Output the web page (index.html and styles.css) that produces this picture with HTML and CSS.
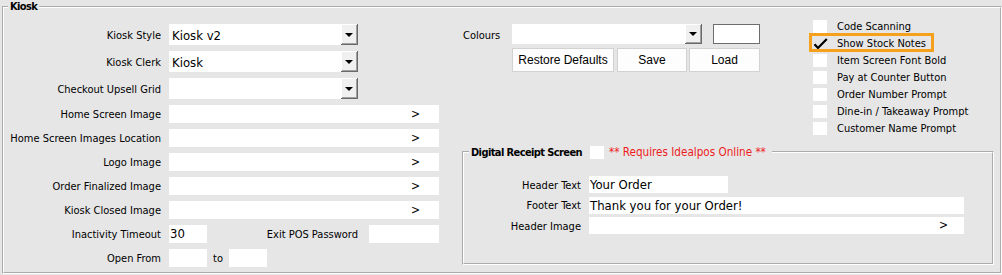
FILE: index.html
```html
<!DOCTYPE html>
<html>
<head>
  <meta charset="UTF-8">
  <title>Kiosk Settings</title>
  <link rel="stylesheet" href="styles.css">
</head>

<body>
  <fieldset class="group kiosk">
    <legend>Kiosk</legend>
    <div class="kiosk-body">

      <!-- left column: label / control pairs -->
      <div class="form">
        <label>Kiosk Style</label>
        <div class="combo"><span class="combo-text">Kiosk v2</span><span class="combo-btn"></span></div>

        <label>Kiosk Clerk</label>
        <div class="combo"><span class="combo-text">Kiosk</span><span class="combo-btn"></span></div>

        <label>Checkout Upsell Grid</label>
        <div class="combo"><span class="combo-text"></span><span class="combo-btn"></span></div>

        <label>Home Screen Image</label>
        <div class="path">&gt;</div>

        <label>Home Screen Images Location</label>
        <div class="path">&gt;</div>

        <label>Logo Image</label>
        <div class="path">&gt;</div>

        <label>Order Finalized Image</label>
        <div class="path">&gt;</div>

        <label>Kiosk Closed Image</label>
        <div class="path">&gt;</div>

        <label>Inactivity Timeout</label>
        <div class="inline-row">
          <span class="field field-short">30</span>
          <span class="inline-label push">Exit POS Password</span>
          <span class="field field-pass"></span>
        </div>

        <label>Open From</label>
        <div class="inline-row">
          <span class="field field-short"></span>
          <span class="inline-label">to</span>
          <span class="field field-short"></span>
        </div>
      </div>

      <!-- right side: colours, options, digital receipt -->
      <div class="side">
        <div class="side-top">
          <div class="colours">
            <div class="colours-row">
              <span class="colours-label">Colours</span>
              <div class="combo combo-colours"><span class="combo-text"></span><span class="combo-btn"></span></div>
              <span class="swatch"></span>
            </div>
            <div class="btn-row">
              <button class="btn btn-restore">Restore Defaults</button>
              <button class="btn btn-save">Save</button>
              <button class="btn btn-load">Load</button>
            </div>
          </div>

          <ul class="checks">
            <li><span class="box"></span>Code Scanning</li>
            <li class="highlighted">
              <span class="box box-checked">
                <svg width="15" height="13" viewBox="0 0 15 13"><path d="M1.5 7.2 L5 11 L13.8 2" fill="none" stroke="#000" stroke-width="2.2"/></svg>
              </span>Show Stock Notes
              <span class="marker"></span>
            </li>
            <li><span class="box"></span>Item Screen Font Bold</li>
            <li><span class="box"></span>Pay at Counter Button</li>
            <li><span class="box"></span>Order Number Prompt</li>
            <li><span class="box"></span>Dine-in / Takeaway Prompt</li>
            <li><span class="box"></span>Customer Name Prompt</li>
          </ul>
        </div>

        <fieldset class="group receipt">
          <legend><b>Digital Receipt Screen</b><span class="box legend-box"></span><span class="note">** Requires Idealpos Online **</span></legend>
          <div class="receipt-form">
            <label>Header Text</label>
            <span class="field field-header">Your Order</span>

            <label>Footer Text</label>
            <span class="field field-wide">Thank you for your Order!</span>

            <label>Header Image</label>
            <div class="path path-wide">&gt;</div>
          </div>
        </fieldset>
      </div>

    </div>
  </fieldset>
</body>
</html>
```

FILE: styles.css
```css
/* base - windows form look */
body {
  margin: 0;
  width: 1002px;
  height: 275px;
  overflow: hidden;
  background: #e6e6e6;
  color: #000;
  font: 11px "DejaVu Sans Condensed", "DejaVu Sans", sans-serif;
}

/* etched group boxes */
.group {
  margin: 0;
  padding: 0;
  min-width: 0;
  box-sizing: border-box;
  border: 2px groove #fff;
}
.group > legend {
  padding: 0 2px;
  height: 14px;
  line-height: 14px;
  white-space: nowrap;
}
/* bold captions are a touch tighter (tahoma bold) */
.group > legend b,
.kiosk > legend { letter-spacing: -0.6px; }

.kiosk {
  margin-left: 2px;
  width: 1000px;
  height: 274px;
}
.kiosk > legend { margin-left: 4px; font-weight: bold; }

.kiosk-body { display: flex; }

/*********************
 * left column form  *
 *********************/
.form {
  margin-top: 10px;
  display: grid;
  grid-template-columns: 157px 270px;
  grid-template-rows: repeat(3, 21px) repeat(7, 18px);
  column-gap: 8px;
  row-gap: 6px;
  align-items: center;
}
.form label, .receipt-form label {
  text-align: right;
  white-space: nowrap;
  padding-top: 1px;
}

/* combo box = white text part + 3d drop button */
.combo {
  display: flex;
  width: 189px;
  height: 21px;
}
.combo-text {
  flex: 1;
  background: #fff;
  padding: 1px 0 0 3px;
  font-size: 13px;
  line-height: 21px;
}
.combo-btn {
  width: 17px;
  box-sizing: border-box;
  background: #f0f0f0;
  border-right: 1px solid #696969;
  border-bottom: 1px solid #696969;
  box-shadow: inset 1px 1px 0 #fff, inset -1px -1px 0 #a0a0a0;
  display: flex;
  align-items: center;
  justify-content: center;
}
.combo-btn:after {
  content: "";
  border-left: 4px solid transparent;
  border-right: 4px solid transparent;
  border-top: 4px solid #000;
  margin-top: 1px;
}

/* file path pickers */
.path {
  width: 270px;
  height: 18px;
  box-sizing: border-box;
  background: #fff;
  padding-right: 19px;
  text-align: right;
  font-size: 12px;
  line-height: 18px;
}

.field {
  display: block;
  height: 18px;
  box-sizing: border-box;
  background: #fff;
  padding-left: 1px;
  font-size: 13px;
  line-height: 18px;
}
.field-short { width: 38px; }
.field-pass  { width: 70px; }

.inline-row {
  display: flex;
  align-items: center;
  height: 18px;
}
.inline-label { margin: 1px 6px 0; }
.inline-label.push { margin: 1px 11px 0 auto; }

/**************
 * right side *
 **************/
.side {
  margin-left: 23px;
  width: 532px;
  display: flex;
  flex-direction: column;
}
.side-top {
  height: 131px;
  display: flex;
  align-items: flex-start;
}

.colours { margin: 10px 0 0 1px; }
.colours-row { display: flex; align-items: center; }
.colours-label { width: 49px; padding-top: 2px; }
.combo-colours { width: 190px; height: 20px; }
.combo-colours .combo-text { line-height: 20px; }
.swatch {
  margin-left: 11px;
  width: 47px;
  height: 20px;
  box-sizing: border-box;
  background: #fff;
  border: 1px solid #6d6d6d;
}

.btn-row {
  margin: 4px 0 0 49px;
  display: flex;
}
.btn {
  height: 24px;
  padding: 0;
  background: #fdfdfd;
  border: 1px solid #d2d2d2;
  font: 12px "Liberation Sans", Arial, sans-serif;
  color: #000;
}
.btn-restore { width: 102px; }
.btn-save    { width: 70px; margin-left: 3px; }
.btn-load    { width: 71px; margin-left: 2px; }

/* option checkboxes */
.checks {
  margin: 4px 0 0 53px;
  padding: 0;
  list-style: none;
}
.checks li {
  position: relative;
  height: 17px;
  display: flex;
  align-items: center;
  white-space: nowrap;
}
.box {
  display: inline-block;
  width: 14px;
  height: 13px;
  background: #fff;
  margin-right: 10px;
  flex: none;
}
.box-checked { background: none; }
.box-checked svg { display: block; }

/* orange call-out drawn over the row */
.marker {
  position: absolute;
  left: -4px;
  top: -2px;
  width: 125px;
  height: 19px;
  box-sizing: border-box;
  border: 3px solid #f6a11e;
}

/* digital receipt group */
.receipt {
  width: 532px;
  height: 120px;
}
.receipt > legend {
  margin-left: 5px;
  padding: 0 6px 0 2px;
}
.legend-box {
  vertical-align: top;
  margin: 1px 5px 0 8px;
}
.note {
  color: #ee1c1c;
  font-size: 11.6px;
}

.receipt-form {
  margin-top: 17px;
  display: grid;
  grid-template-columns: 117px auto;
  grid-template-rows: repeat(3, 17px);
  column-gap: 8px;
  row-gap: 3.5px;
  align-items: center;
}
.receipt-form .field { height: 17px; line-height: 17px; }
.field-header { width: 139px; }
.field-wide   { width: 375px; }
.path-wide {
  width: 375px;
  height: 17px;
  line-height: 17px;
  padding-right: 16px;
}
```
